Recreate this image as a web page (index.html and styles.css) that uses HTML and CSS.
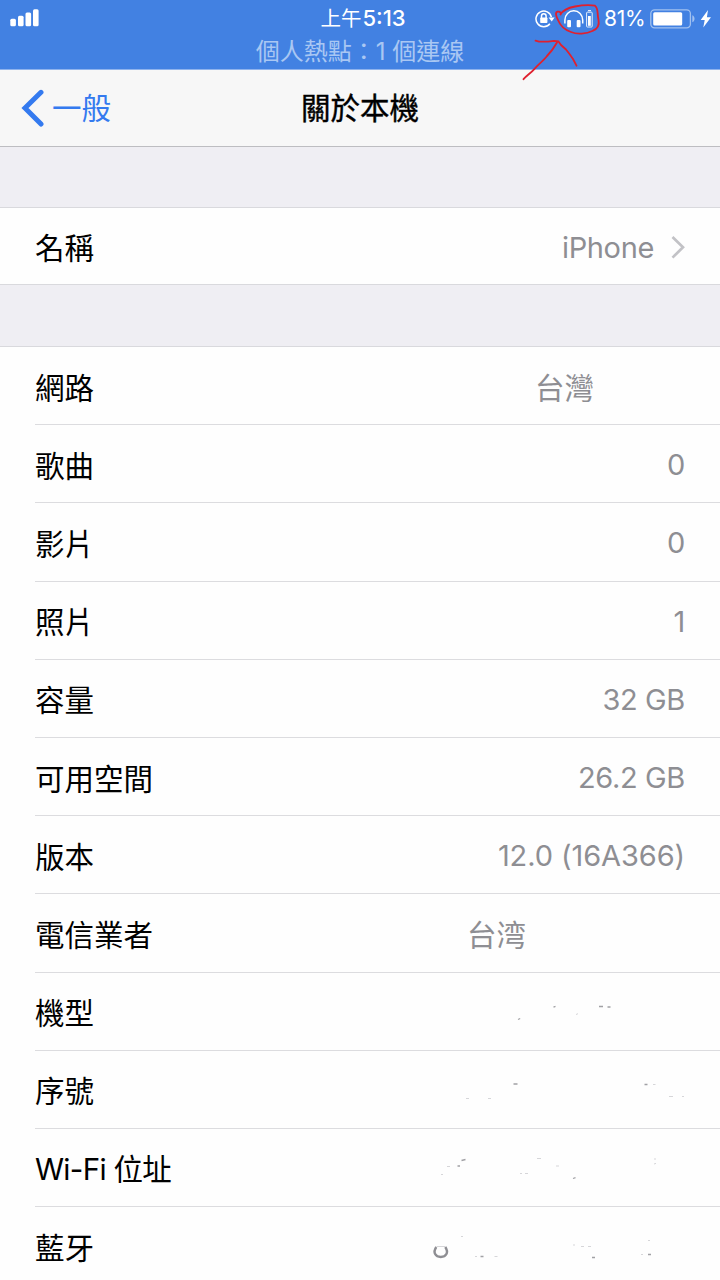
FILE: index.html
```html
<!DOCTYPE html>
<html lang="zh-Hant">
<head>
<meta charset="utf-8">
<title>關於本機</title>
<link rel="stylesheet" href="styles.css">
</head>
<body>
<div class="screen">
  <header class="status">
    <div class="status-top">
      <svg class="signal" width="30" height="18" viewBox="0 0 30 18" fill="#fff"><rect x="0.3" y="9.8" width="5.6" height="7.4" rx="1.5"/><rect x="8" y="6.8" width="5.6" height="10.4" rx="1.5"/><rect x="15.5" y="3.6" width="5.6" height="13.6" rx="1.5"/><rect x="23" y="0.2" width="5.6" height="17" rx="1.5"/></svg>
      <span class="clock">上午<b>5:13</b></span>
      <div class="indicators">
        <svg class="lock" width="20" height="20" viewBox="0 0 20 20" fill="none" stroke="#fff" stroke-width="1.5"><path d="M14.9 14.7A7.8 7.8 0 1 1 16.4 8.2"/><path d="M13.6 8.4h6l-2.9 4z" fill="#fff" stroke="none"/><rect x="5.2" y="8.5" width="7.2" height="5.5" rx=".8" fill="#fff" stroke="none"/><path d="M6.5 9V7.1a2.3 2.3 0 0 1 4.6 0V9"/></svg>
        <svg class="headphones" width="20" height="20" viewBox="0 0 20 20" fill="#fff"><path d="M.9 14.5V11a8.9 9.3 0 0 1 17.8 0v3.5" fill="none" stroke="#fff" stroke-width="1.5"/><rect x="3.2" y="11" width="3.8" height="7.2" rx="1"/><rect x="12.7" y="11" width="3.8" height="7.2" rx="1"/></svg>
        <svg class="mini-battery" width="7" height="18" viewBox="0 0 7 18"><path d="M2 .6h3" stroke="#e6effc" stroke-width="1.2"/><rect x=".6" y="2.2" width="5.6" height="14.8" rx=".8" fill="none" stroke="#e6effc"/><rect x="2" y="6" width="2.8" height="9.8" fill="#fff"/></svg>
        <span class="percent">81%</span>
        <svg class="battery" width="46" height="20" viewBox="0 0 46 20"><rect x=".8" y=".8" width="39.6" height="18" rx="3.8" fill="none" stroke="#a1c1f0" stroke-width="1.3"/><rect x="3.2" y="3.2" width="29" height="13.2" rx="1.5" fill="#fff"/><path d="M42.3 6.3c3 1.1 3 5.9 0 7z" fill="#a1c1f0"/></svg>
        <svg class="bolt" width="12" height="18" viewBox="0 0 12 18"><path d="M8 0 .7 10h4L3.3 17.5 11 7.2H6.9z" fill="#fff"/></svg>
      </div>
    </div>
    <div class="hotspot">個人熱點：1 個連線</div>
    <svg class="annotation" width="90" height="86" viewBox="0 0 90 86" fill="none" stroke="#e0202e" stroke-width="1.8" stroke-linecap="round" stroke-linejoin="round"><path d="M39.5 14.5C42 10 46 8 54 6.5C62 5 70 5 74 5.7C77.500 8 76 13 77.500 20C78.500 25 76 29 72 30.700C65 34 56 34.500 50 32C44 30 39 25 37 20C35 16 34 12.500 36.500 11.700C39 11 40.500 13 39.5 14.5"/><path d="M2.500 79.200C6 75 9 74 14 68.300C17 65 22 61 26 56C29 53 34 46 36 42.500M14.500 40.700 18 41.700H27L33 40.800 37.500 41.500 40 45 45 49.500 48.500 54 52 59 55.500 65.700"/></svg>
  </header>
  <nav class="navbar">
    <a class="back"><svg width="23" height="38" viewBox="0 0 23 38" fill="none" stroke="#347aef" stroke-width="5" stroke-linecap="round" stroke-linejoin="miter"><path d="M20 3.300 4 19 20 35"/></svg><span>一般</span></a>
    <h1>關於本機</h1>
  </nav>
  <main>
    <section class="group name-group">
      <div class="row"><span>名稱</span><span class="value">iPhone<svg class="chevron" width="14" height="24" viewBox="0 0 14 24" fill="none" stroke="#c2c2c6" stroke-width="2.7"><path d="M1.500 2 12 12.300 1.500 22.600"/></svg></span></div>
    </section>
    <section class="group details">
      <div class="row"><span>網路</span><span class="value network">台灣</span></div>
      <div class="row"><span>歌曲</span><span class="value">0</span></div>
      <div class="row"><span>影片</span><span class="value">0</span></div>
      <div class="row"><span>照片</span><span class="value">1</span></div>
      <div class="row"><span>容量</span><span class="value">32 GB</span></div>
      <div class="row"><span>可用空間</span><span class="value">26.2 GB</span></div>
      <div class="row"><span>版本</span><span class="value version">12.0 (16A366)</span></div>
      <div class="row"><span>電信業者</span><span class="value carrier">台湾</span></div>
      <div class="row"><span>機型</span><svg class="residue" width="265" height="40" viewBox="0 -2 265 40"><path d="M98 26.500l2.200-1M133.500 14.200l2-.8M179 13.500h4M187.500 14h3"/><path class="faint" d="M156 21.500l2-.8"/></svg></div>
      <div class="row"><span>序號</span><svg class="residue" width="265" height="40" viewBox="0 -2 265 40"><path d="M93.500 13h4M224.500 13.500h3"/><path class="faint" d="M46 27.500h3M68 27.500h3M233 13.500h2.500M249 25.500h4M262 25.500h2"/></svg></div>
      <div class="row"><span class="wifi">Wi-Fi 位址</span><svg class="residue" width="265" height="40" viewBox="0 -3 265 40"><path d="M41.500 10.500l4-1M37.500 16h2.500M153 28.500l2.500-.8"/><path class="faint" d="M27 16.500h3M21 24.500h2M100 23.500h2M105 23.500h3M117 8.500h4M136 16h3M234 9h2M234 14l2-.6"/></svg></div>
      <div class="row"><span>藍牙</span><svg class="residue" width="265" height="40" viewBox="0 -12 265 40"><path class="arc" d="M16.300 9C12.500 14.500 15.500 19 20.800 19S29 14.500 25.300 9"/><path d="M60.500 18.500h3M172 19.500h3M228 16.500h3"/><path class="faint" d="M16.500 8.500h9M41-1.500h2M55 18.500h2M74.500 18.500h3M153 7h2M161 8.500h3M168 8.500h3M221 16.500h2M228 2.500h2"/></svg></div>
    </section>
  </main>
</div>
</body>
</html>
```
FILE: styles.css
```css
* { box-sizing: border-box; }

body {
  margin: 0;
  background: #efeef3;
  color: #000;
  font-family: Inter, "Noto Sans CJK TC", sans-serif;
  font-size: 29.5px;
}

.screen {
  width: 720px;
  height: 1280px;
  overflow: hidden;
  display: flex;
  flex-direction: column;
}

.status {
  position: relative;
  height: 70px;
  flex: none;
  background: #4281e2;
  border-bottom: 1px solid #8fb3ed;
  color: #fff;
}

.status-top {
  display: grid;
  grid-template-columns: 250px 206px 1fr;
  height: 36px;
  padding-left: 10px;
  align-items: center;
}

.signal { margin-top: -1px; }

.clock {
  justify-self: center;
  font-size: 20.5px;
  line-height: 36px;
  white-space: nowrap;
}

.clock b { font-weight: 500; font-size: 22px; margin-left: 1px; }

.indicators { display: flex; align-items: center; padding-left: 69px; }
.headphones { margin-left: 9px; }
.mini-battery { margin-left: 2px; }
.percent { margin-left: 11px; width: 46px; font-size: 21px; letter-spacing: -0.3px; white-space: nowrap; }
.bolt { margin-left: 4px; }

.hotspot {
  height: 33px;
  line-height: 31px;
  text-align: center;
  font-size: 24px;
  color: #a9c7f3;
  white-space: nowrap;
}

.annotation { position: absolute; left: 521px; top: 0; z-index: 2; }

.navbar {
  display: grid;
  grid-template-columns: 220px 280px 220px;
  align-items: center;
  height: 77px;
  flex: none;
  background: #f7f7f7;
  border-bottom: 1px solid #bdbdc1;
}

.navbar h1 {
  margin: 0;
  text-align: center;
  font-size: 29.5px;
  font-weight: 400;
  line-height: 76px;
  -webkit-text-stroke: 0.4px;
}

.back {
  display: flex;
  align-items: center;
  gap: 8px;
  padding-left: 21px;
  color: #347aef;
  line-height: 76px;
}

.group { background: #fefefe; border-top: 1px solid #d9d9dd; }
.name-group { margin-top: 60px; height: 78px; border-bottom: 1px solid #d9d9dd; }
.details { margin-top: 61px; }

.row {
  display: flex;
  justify-content: space-between;
  align-items: center;
  height: 78.2px;
  margin-left: 35px;
  padding-right: 35px;
  border-bottom: 1px solid #dcdcdf;
  white-space: nowrap;
}

.name-group .row { height: 76px; border: 0; }

.value {
  display: flex;
  align-items: center;
  padding-top: 2px;
  color: #8e8e93;
  font-size: 29px;
  letter-spacing: -0.35px;
}

.version { letter-spacing: -0.1px; }
.wifi { letter-spacing: -0.7px; }

.chevron { margin-left: 17px; }
.network, .carrier { padding-top: 0; letter-spacing: 0; font-size: 29.5px; }
.network { margin-right: 91px; }
.carrier { margin-right: 159px; }

.residue { fill: none; stroke: #a1a1a5; stroke-width: 1.3; }
.residue .faint { stroke: #d6d6d9; stroke-width: 1; }
.residue .arc { stroke: #8e8e93; stroke-width: 2.4; }
```
